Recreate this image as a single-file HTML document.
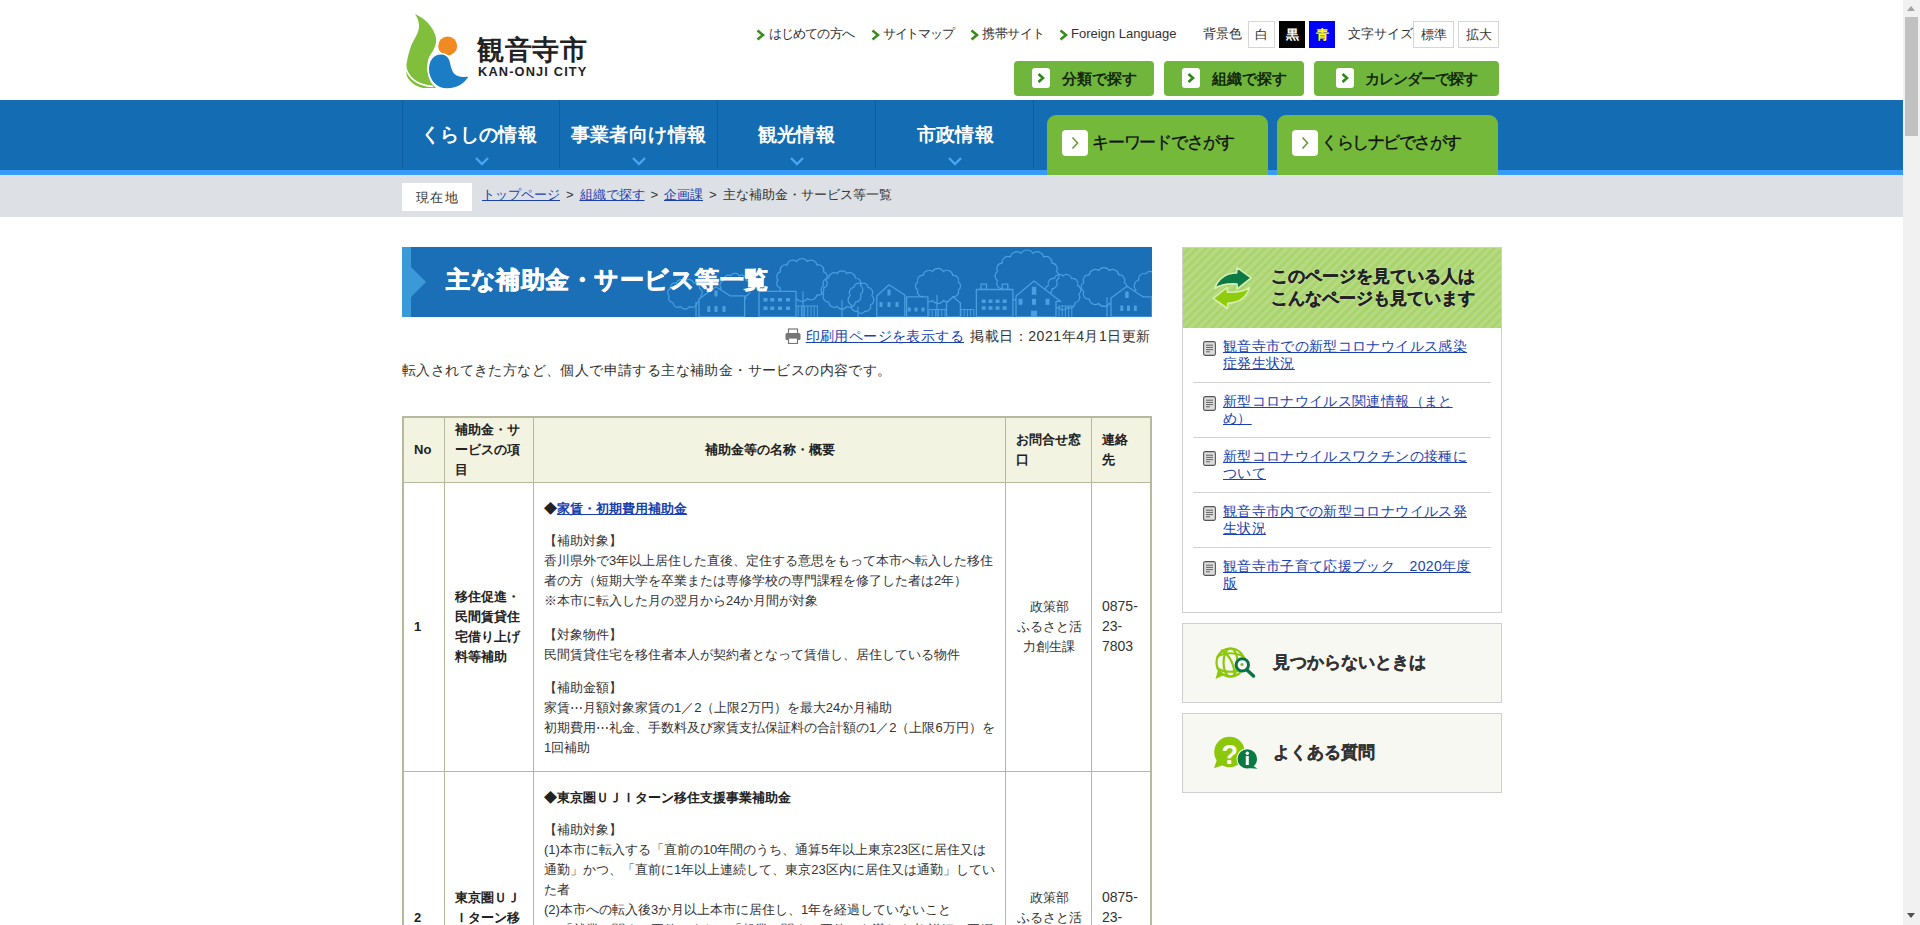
<!DOCTYPE html>
<html lang="ja">
<head>
<meta charset="utf-8">
<title>主な補助金・サービス等一覧 - 観音寺市</title>
<style>
*{box-sizing:border-box;}
html,body{margin:0;padding:0;}
body{width:1920px;height:925px;overflow:hidden;position:relative;background:#fff;font-family:"Liberation Sans",sans-serif;color:#333;font-size:13px;}
a{color:#0033aa;}
.abs{position:absolute;}
/* scrollbar */
#sb{position:absolute;left:1903px;top:0;width:17px;height:925px;background:#f1f1f1;}
#sb .thumb{position:absolute;left:2px;top:17px;width:13px;height:119px;background:#c1c1c1;}
#sb .up{position:absolute;left:4px;top:6px;width:0;height:0;border-left:4.5px solid transparent;border-right:4.5px solid transparent;border-bottom:5px solid #a3a3a3;}
#sb .dn{position:absolute;left:4px;top:913px;width:0;height:0;border-left:4.5px solid transparent;border-right:4.5px solid transparent;border-top:5px solid #505050;}
/* header */
#hdr{position:absolute;left:0;top:0;width:1903px;height:100px;background:#fff;}
.tlink{position:absolute;top:25px;font-size:13px;line-height:18px;color:#333;white-space:nowrap;}
.chev{position:absolute;width:9px;height:12px;}
.tbox{position:absolute;top:21px;height:27px;border:1px solid #d6d6d6;background:#fff;font-size:13px;line-height:25px;text-align:center;color:#333;}
.gbtn{position:absolute;top:61px;height:35px;background:#70b63c;border-radius:4px;}
.gbtn .ic{position:absolute;left:18px;top:7px;width:18px;height:20px;background:#fff;border-radius:3px;}
.gbtn .tx{position:absolute;top:8px;font-size:15px;line-height:19px;font-weight:bold;color:#14280a;white-space:nowrap;}
/* nav */
#nav{position:absolute;left:0;top:100px;width:1903px;height:70px;background:#146cb3;}
#navline{position:absolute;left:0;top:170px;width:1903px;height:5px;background:#379cf8;}
.ni{position:absolute;top:100px;height:68px;border-left:1px solid #0d5c9e;}
.ni .tx{position:absolute;left:0;right:0;top:23px;text-align:center;color:#fff;font-weight:bold;font-size:19px;line-height:24px;letter-spacing:0.4px;white-space:nowrap;}
.ni svg{position:absolute;top:56px;}
.tab{position:absolute;top:115px;height:60px;width:221px;background:#74b93a;border-radius:9px 9px 0 0;}
.tab .ic{position:absolute;left:15px;top:15px;width:26px;height:26px;background:#fff;border-radius:4px;}
.tab .tx{position:absolute;top:17px;font-size:17px;line-height:22px;color:#111;white-space:nowrap;-webkit-text-stroke:0.35px #111;}
/* breadcrumb */
#bc{position:absolute;left:0;top:175px;width:1903px;height:42px;background:#dde1e5;}
#here{position:absolute;left:402px;top:183px;width:70px;height:28px;background:#fff;font-size:13px;line-height:30px;text-align:center;color:#333;letter-spacing:1.3px;text-indent:1.3px;}
#crumbs{position:absolute;left:482px;top:186px;font-size:13px;line-height:18px;color:#333;white-space:nowrap;}
#crumbs a{color:#1a3fb0;}
#crumbs .gt{display:inline-block;width:19.5px;text-align:center;}
/* main */
#ttl{position:absolute;left:402px;top:247px;width:750px;height:70px;background:#1b6fb7;overflow:hidden;}
#ttl .strip{position:absolute;left:0;top:0;width:9px;height:70px;background:#3a9ad8;}
#ttl .tri{position:absolute;left:9px;top:19.5px;width:0;height:0;border-top:15.5px solid transparent;border-bottom:15.5px solid transparent;border-left:15px solid #3a9ad8;}
#ttl h1{position:absolute;left:44px;top:18px;margin:0;font-size:24px;letter-spacing:0.5px;line-height:30px;color:#fff;font-weight:bold;white-space:nowrap;-webkit-text-stroke:0.7px #fff;}
#ttl svg{position:absolute;left:0;top:0;}
#pinfo{position:absolute;right:769px;top:327px;font-size:14px;letter-spacing:0.4px;line-height:18px;white-space:nowrap;color:#333;}
#intro{position:absolute;left:402px;top:361px;font-size:14px;letter-spacing:0.4px;line-height:18px;color:#333;white-space:nowrap;}
table.t{position:absolute;left:402px;top:416px;width:750px;table-layout:fixed;border-collapse:separate;border-spacing:0;border:2px solid #b6b99d;font-size:13px;color:#333;}
table.t th,table.t td{border-right:1px solid #b6b99d;border-bottom:1px solid #b6b99d;line-height:20px;vertical-align:middle;overflow:hidden;}
table.t th:last-child,table.t td:last-child{border-right:none;}
table.t tr:last-child td{border-bottom:none;}
table.t th{background:#f2f3e1;font-weight:bold;color:#222;text-align:left;padding:2px 9px 2px 10px;height:65px;}
table.t th:last-child{padding-right:10px;}
table.t td{padding:16px 9px 13px 10px;}
table.t td:last-child{padding-right:10px;}
table.t td.b,table.t td.c{padding-top:14px;padding-bottom:15px;}
table.t td:last-child{padding-top:13px;padding-bottom:16px;}
table.t td p{margin:0 0 13px 0;}
table.t td p:last-child{margin-bottom:0;}
table.t td.b{font-weight:bold;color:#222;}
table.t td.c{text-align:center;}
/* sidebar */
#side1{position:absolute;left:1182px;top:247px;width:320px;height:366px;border:1px solid #cfcfcf;background:#fff;}
#side1 .hd{position:absolute;left:0;top:0;width:318px;height:80px;background:#a9d46e;background-image:repeating-linear-gradient(135deg,rgba(255,255,255,0.14) 0 3px,rgba(255,255,255,0) 3px 6px);}
#side1 .hd .tx{position:absolute;left:88px;top:18px;font-size:17px;line-height:22px;font-weight:bold;color:#222;white-space:nowrap;-webkit-text-stroke:0.3px #222;text-shadow:0 0 2px rgba(255,255,255,0.6);}
#side1 ul{list-style:none;margin:0;padding:0;position:absolute;left:10px;top:80px;width:298px;}
#side1 li{position:relative;height:55px;border-bottom:1px solid #d3d3d3;}
#side1 li:last-child{border-bottom:none;}
#side1 li .doc{position:absolute;left:10px;top:13px;width:13px;height:15px;}
#side1 li a{position:absolute;left:30px;top:10px;width:252px;font-size:14px;letter-spacing:0.35px;line-height:17px;color:#1a3fb0;}
.sbox{position:absolute;left:1182px;width:320px;height:80px;border:1px solid #cfcfcf;background:#f8f8f2;}
.sbox .tx{position:absolute;left:90px;top:28px;font-size:17px;line-height:22px;font-weight:bold;color:#333;white-space:nowrap;-webkit-text-stroke:0.3px #333;}
.sbox svg{position:absolute;}
</style>
</head>
<body>
<div id="hdr"></div>
<!-- logo -->
<svg class="abs" style="left:400px;top:8px" width="80" height="86" viewBox="0 0 80 86">
  <path d="M15 6.1 C24 10 33 18 35.9 29.3 C37 36 34 42 30 47.4 C27 52 27 60 28 65.6 C29 72 32 77 36.3 80.1 L22.7 80.1 C14 78 7 72 6.4 65.6 C5.5 57 8 47 10.9 38.4 C13 32 19 26 19 18 C19 13 17 9 15 6.1 Z" fill="#80bf3c"/>
  <path d="M5.6 59 C8.5 71 18.5 77.3 33 78.6" stroke="#fff" stroke-width="1.5" fill="none"/>
  <circle cx="47.7" cy="37.9" r="9.5" fill="#f28a22"/>
  <path d="M40.9 45.6 C45.5 45.6 48.5 48 50 52 C51.5 56 51.5 62 55 65.5 C59 69 65 68.5 70 67.5 C66 75 58 81 47.3 81.1 C36 81.2 28.2 72 28.2 61.1 C28.2 52 33.5 45.6 40.9 45.6 Z" fill="#1a7dc6" stroke="#fff" stroke-width="1.6"/>
</svg>
<div class="abs" style="left:477px;top:33px;font-size:27px;line-height:34px;color:#222;font-weight:bold;white-space:nowrap;letter-spacing:0.5px">観音寺市</div>
<div class="abs" style="left:478px;top:64px;font-size:12.8px;line-height:16px;color:#222;font-weight:bold;letter-spacing:1.15px;white-space:nowrap">KAN-ONJI CITY</div>

<!-- top links -->
<svg class="chev" style="left:755.5px;top:28.5px" viewBox="0 0 9 12"><path d="M1.5 1.5 L7 6 L1.5 10.5" stroke="#3a8c1c" stroke-width="2.6" fill="none"/></svg>
<div class="tlink" style="left:769px;letter-spacing:-0.9px">はじめての方へ</div>
<svg class="chev" style="left:870.5px;top:28.5px" viewBox="0 0 9 12"><path d="M1.5 1.5 L7 6 L1.5 10.5" stroke="#3a8c1c" stroke-width="2.6" fill="none"/></svg>
<div class="tlink" style="left:883px;letter-spacing:-1.3px">サイトマップ</div>
<svg class="chev" style="left:969.5px;top:28.5px" viewBox="0 0 9 12"><path d="M1.5 1.5 L7 6 L1.5 10.5" stroke="#3a8c1c" stroke-width="2.6" fill="none"/></svg>
<div class="tlink" style="left:982px;letter-spacing:-0.4px">携帯サイト</div>
<svg class="chev" style="left:1058.5px;top:28.5px" viewBox="0 0 9 12"><path d="M1.5 1.5 L7 6 L1.5 10.5" stroke="#3a8c1c" stroke-width="2.6" fill="none"/></svg>
<div class="tlink" style="left:1071px">Foreign Language</div>

<div class="tlink" style="left:1203px">背景色</div>
<div class="tbox" style="left:1248px;width:27px">白</div>
<div class="tbox" style="left:1279px;width:26px;background:#000;border-color:#000;color:#fff;font-weight:bold">黒</div>
<div class="tbox" style="left:1309px;width:26px;background:#0000ff;border-color:#0000ff;color:#ffff00;font-weight:bold">青</div>
<div class="tlink" style="left:1348px">文字サイズ</div>
<div class="tbox" style="left:1413px;width:41px">標準</div>
<div class="tbox" style="left:1458px;width:41px">拡大</div>

<div class="gbtn" style="left:1014px;width:140px"><div class="ic"><svg width="18" height="20" viewBox="0 0 18 20"><path d="M6.5 6 L11 10 L6.5 14" stroke="#2e8a14" stroke-width="2.6" fill="none"/></svg></div><div class="tx" style="left:48px">分類で探す</div></div>
<div class="gbtn" style="left:1164px;width:140px"><div class="ic"><svg width="18" height="20" viewBox="0 0 18 20"><path d="M6.5 6 L11 10 L6.5 14" stroke="#2e8a14" stroke-width="2.6" fill="none"/></svg></div><div class="tx" style="left:48px">組織で探す</div></div>
<div class="gbtn" style="left:1314px;width:185px"><div class="ic" style="left:22px"><svg width="18" height="20" viewBox="0 0 18 20"><path d="M6.5 6 L11 10 L6.5 14" stroke="#2e8a14" stroke-width="2.6" fill="none"/></svg></div><div class="tx" style="left:51px;letter-spacing:-0.95px">カレンダーで探す</div></div>

<!-- nav -->
<div id="nav"></div>
<div id="navline"></div>
<div class="ni" style="left:402px;width:157px"><div class="tx" style="left:-2px;right:2px">くらしの情報</div><svg style="left:71px" width="16" height="10" viewBox="0 0 16 10"><path d="M2 2 L8 8 L14 2" stroke="#4aa6f0" stroke-width="2.4" fill="none"/></svg></div>
<div class="ni" style="left:559px;width:158px"><div class="tx">事業者向け情報</div><svg style="left:71px" width="16" height="10" viewBox="0 0 16 10"><path d="M2 2 L8 8 L14 2" stroke="#4aa6f0" stroke-width="2.4" fill="none"/></svg></div>
<div class="ni" style="left:717px;width:158px"><div class="tx">観光情報</div><svg style="left:71px" width="16" height="10" viewBox="0 0 16 10"><path d="M2 2 L8 8 L14 2" stroke="#4aa6f0" stroke-width="2.4" fill="none"/></svg></div>
<div class="ni" style="left:875px;width:158px"><div class="tx" style="left:1px;right:-1px">市政情報</div><svg style="left:71px" width="16" height="10" viewBox="0 0 16 10"><path d="M2 2 L8 8 L14 2" stroke="#4aa6f0" stroke-width="2.4" fill="none"/></svg></div>
<div class="ni" style="left:1033px;width:1px"></div>
<div class="tab" style="left:1047px"><div class="ic"><svg width="26" height="26" viewBox="0 0 26 26"><path d="M10.5 7.5 L15.5 13 L10.5 18.5" stroke="#6d9c45" stroke-width="1.7" fill="none"/></svg></div><div class="tx" style="left:45px;letter-spacing:-1.2px">キーワードでさがす</div></div>
<div class="tab" style="left:1277px"><div class="ic"><svg width="26" height="26" viewBox="0 0 26 26"><path d="M10.5 7.5 L15.5 13 L10.5 18.5" stroke="#6d9c45" stroke-width="1.7" fill="none"/></svg></div><div class="tx" style="left:44px;letter-spacing:-1.5px">くらしナビでさがす</div></div>

<!-- breadcrumb -->
<div id="bc"></div>
<div id="here">現在地</div>
<div id="crumbs"><a href="#">トップページ</a><span class="gt">&gt;</span><a href="#">組織で探す</a><span class="gt">&gt;</span><a href="#">企画課</a><span class="gt">&gt;</span>主な補助金・サービス等一覧</div>

<!-- title -->
<div id="ttl"><svg width="750" height="70" viewBox="0 0 750 70" style="position:absolute;left:0;top:0"><path d="M287.5 59.5 A5.2 5.2 0 0 1 278.5 59.5 A5.0 5.0 0 0 1 270.9 55.5 A4.4 4.4 0 0 1 267.2 48.9 A4.3 4.3 0 0 1 268.4 41.6 A4.7 4.7 0 0 1 274.3 36.1 A5.2 5.2 0 0 1 283.0 34.0 A5.2 5.2 0 0 1 291.7 36.1 A4.7 4.7 0 0 1 297.6 41.6 A4.3 4.3 0 0 1 298.8 48.9 A4.4 4.4 0 0 1 295.1 55.5 A5.0 5.0 0 0 1 287.5 59.5 Z" fill="none" stroke="#4a9fe0" stroke-width="1.2"/><path d="M294 54.8 V70" stroke="#4a9fe0" stroke-width="1.2"/><path d="M337.3 53.4 A5.0 5.0 0 0 1 328.7 53.4 A4.9 4.9 0 0 1 321.7 48.6 A4.7 4.7 0 0 1 319.0 41.0 A4.7 4.7 0 0 1 321.7 33.4 A4.9 4.9 0 0 1 328.7 28.6 A5.0 5.0 0 0 1 337.3 28.6 A4.9 4.9 0 0 1 344.3 33.4 A4.7 4.7 0 0 1 347.0 41.0 A4.7 4.7 0 0 1 344.3 48.6 A4.9 4.9 0 0 1 337.3 53.4 Z" fill="none" stroke="#4a9fe0" stroke-width="1.2"/><path d="M405.3 51.5 A6.2 6.2 0 0 1 394.7 51.5 A6.0 6.0 0 0 1 385.0 47.9 A5.4 5.4 0 0 1 378.4 41.2 A5.0 5.0 0 0 1 376.0 33.0 A5.0 5.0 0 0 1 378.4 24.8 A5.4 5.4 0 0 1 385.0 18.1 A6.0 6.0 0 0 1 394.7 14.5 A6.2 6.2 0 0 1 405.3 14.5 A6.0 6.0 0 0 1 415.0 18.1 A5.4 5.4 0 0 1 421.6 24.8 A5.0 5.0 0 0 1 424.0 33.0 A5.0 5.0 0 0 1 421.6 41.2 A5.4 5.4 0 0 1 415.0 47.9 A6.0 6.0 0 0 1 405.3 51.5 Z" fill="none" stroke="#4a9fe0" stroke-width="1.2"/><path d="M401 44.4 V70" stroke="#4a9fe0" stroke-width="1.2"/><path d="M444.9 59.4 A5.7 5.7 0 0 1 435.1 59.4 A5.6 5.6 0 0 1 426.6 55.0 A5.3 5.3 0 0 1 421.6 47.4 A5.1 5.1 0 0 1 421.6 38.6 A5.3 5.3 0 0 1 426.6 31.0 A5.6 5.6 0 0 1 435.1 26.6 A5.7 5.7 0 0 1 444.9 26.6 A5.6 5.6 0 0 1 453.4 31.0 A5.3 5.3 0 0 1 458.4 38.6 A5.1 5.1 0 0 1 458.4 47.4 A5.3 5.3 0 0 1 453.4 55.0 A5.6 5.6 0 0 1 444.9 59.4 Z" fill="none" stroke="#4a9fe0" stroke-width="1.2"/><path d="M440 53.2 V70" stroke="#4a9fe0" stroke-width="1.2"/><path d="M462.8 64.2 A4.4 4.4 0 0 1 455.2 64.2 A4.9 4.9 0 0 1 449.5 58.0 A5.5 5.5 0 0 1 448.2 48.6 A5.3 5.3 0 0 1 451.9 40.3 A4.5 4.5 0 0 1 459.0 37.0 A4.5 4.5 0 0 1 466.1 40.3 A5.3 5.3 0 0 1 469.8 48.6 A5.5 5.5 0 0 1 468.5 58.0 A4.9 4.9 0 0 1 462.8 64.2 Z" fill="none" stroke="#4a9fe0" stroke-width="1.2"/><path d="M456 59.4 V70" stroke="#4a9fe0" stroke-width="1.2"/><path d="M541.4 53.5 A6.3 6.3 0 0 1 530.6 53.5 A5.9 5.9 0 0 1 521.2 49.6 A5.0 5.0 0 0 1 515.7 42.9 A4.5 4.5 0 0 1 515.7 35.1 A5.0 5.0 0 0 1 521.2 28.4 A5.9 5.9 0 0 1 530.6 24.5 A6.3 6.3 0 0 1 541.4 24.5 A5.9 5.9 0 0 1 550.8 28.4 A5.0 5.0 0 0 1 556.3 35.1 A4.5 4.5 0 0 1 556.3 42.9 A5.0 5.0 0 0 1 550.8 49.6 A5.9 5.9 0 0 1 541.4 53.5 Z" fill="none" stroke="#4a9fe0" stroke-width="1.2"/><path d="M535 48.0 V70" stroke="#4a9fe0" stroke-width="1.2"/><path d="M630.9 51.6 A6.8 6.8 0 0 1 619.1 51.6 A6.6 6.6 0 0 1 608.3 48.1 A6.0 6.0 0 0 1 600.1 41.8 A5.5 5.5 0 0 1 595.6 33.5 A5.2 5.2 0 0 1 595.6 24.5 A5.5 5.5 0 0 1 600.1 16.2 A6.0 6.0 0 0 1 608.3 9.9 A6.6 6.6 0 0 1 619.1 6.4 A6.8 6.8 0 0 1 630.9 6.4 A6.6 6.6 0 0 1 641.7 9.9 A6.0 6.0 0 0 1 649.9 16.2 A5.5 5.5 0 0 1 654.4 24.5 A5.2 5.2 0 0 1 654.4 33.5 A5.5 5.5 0 0 1 649.9 41.8 A6.0 6.0 0 0 1 641.7 48.1 A6.6 6.6 0 0 1 630.9 51.6 Z" fill="none" stroke="#4a9fe0" stroke-width="1.2"/><path d="M665.5 60.4 A5.2 5.2 0 0 1 656.5 60.4 A5.2 5.2 0 0 1 648.9 55.5 A5.2 5.2 0 0 1 645.2 47.3 A5.2 5.2 0 0 1 646.4 38.4 A5.2 5.2 0 0 1 652.3 31.5 A5.2 5.2 0 0 1 661.0 29.0 A5.2 5.2 0 0 1 669.7 31.5 A5.2 5.2 0 0 1 675.6 38.4 A5.2 5.2 0 0 1 676.8 47.3 A5.2 5.2 0 0 1 673.1 55.5 A5.2 5.2 0 0 1 665.5 60.4 Z" fill="none" stroke="#4a9fe0" stroke-width="1.2"/><path d="M707.4 56.4 A6.3 6.3 0 0 1 696.6 56.4 A6.0 6.0 0 0 1 687.2 52.0 A5.4 5.4 0 0 1 681.7 44.4 A5.1 5.1 0 0 1 681.7 35.6 A5.4 5.4 0 0 1 687.2 28.0 A6.0 6.0 0 0 1 696.6 23.6 A6.3 6.3 0 0 1 707.4 23.6 A6.0 6.0 0 0 1 716.8 28.0 A5.4 5.4 0 0 1 722.3 35.6 A5.1 5.1 0 0 1 722.3 44.4 A5.4 5.4 0 0 1 716.8 52.0 A6.0 6.0 0 0 1 707.4 56.4 Z" fill="none" stroke="#4a9fe0" stroke-width="1.2"/><path d="M705 50.2 V70" stroke="#4a9fe0" stroke-width="1.2"/><path d="M752.3 59.2 A5.0 5.0 0 0 1 743.7 59.2 A5.4 5.4 0 0 1 736.7 53.0 A6.0 6.0 0 0 1 734.0 43.0 A6.0 6.0 0 0 1 736.7 33.0 A5.4 5.4 0 0 1 743.7 26.8 A5.0 5.0 0 0 1 752.3 26.8 A5.4 5.4 0 0 1 759.3 33.0 A6.0 6.0 0 0 1 762.0 43.0 A6.0 6.0 0 0 1 759.3 53.0 A5.4 5.4 0 0 1 752.3 59.2 Z" fill="none" stroke="#4a9fe0" stroke-width="1.2"/><path d="M393 59 H416 M393 59 V70 M396.2 59 V70 M399.4 59 V70 M402.6 59 V70 M405.8 59 V70 M409.0 59 V70 M412.2 59 V70 M415.4 59 V70" stroke="#4a9fe0" stroke-width="1"/><path d="M527 62.5 H572 M527 62.5 V70 M530.2 62.5 V70 M533.4 62.5 V70 M536.6 62.5 V70 M539.8 62.5 V70 M543.0 62.5 V70 M546.2 62.5 V70 M549.4 62.5 V70 M552.6 62.5 V70 M555.8 62.5 V70 M559.0 62.5 V70 M562.2 62.5 V70 M565.4 62.5 V70 M568.6 62.5 V70 M571.8 62.5 V70" stroke="#4a9fe0" stroke-width="1"/><path d="M657 59 H671 M657 59 V70 M660.2 59 V70 M663.4 59 V70 M666.6 59 V70 M669.8 59 V70" stroke="#4a9fe0" stroke-width="1"/><path d="M297 70 L297 52 L314 39.7 L328 48.8 L342.6 48.8 L342.6 70 Z" fill="#1b6fb7" stroke="#4a9fe0" stroke-width="1.3" stroke-linejoin="round"/><rect x="312.5" y="43.5" width="3" height="6" fill="#4a9fe0"/><rect x="305.3" y="59" width="3" height="6" fill="#4a9fe0"/><rect x="312.5" y="59" width="3" height="6" fill="#4a9fe0"/><rect x="320.5" y="59" width="3" height="6" fill="#4a9fe0"/><path d="M357 70 L357 44.3 L394 44.3 L394 70 Z" fill="#1b6fb7" stroke="#4a9fe0" stroke-width="1.3" stroke-linejoin="round"/><rect x="361.5" y="51" width="4" height="3.5" fill="#4a9fe0"/><rect x="368.3" y="51" width="4" height="3.5" fill="#4a9fe0"/><rect x="376.0" y="51" width="4" height="3.5" fill="#4a9fe0"/><rect x="384.0" y="51" width="4" height="3.5" fill="#4a9fe0"/><rect x="361.5" y="59.5" width="4" height="3.5" fill="#4a9fe0"/><rect x="368.3" y="59.5" width="4" height="3.5" fill="#4a9fe0"/><rect x="376.0" y="59.5" width="4" height="3.5" fill="#4a9fe0"/><rect x="384.0" y="59.5" width="4" height="3.5" fill="#4a9fe0"/><path d="M504.6 70 L504.6 49.8 L525.9 49.8 L525.9 70 Z" fill="#1b6fb7" stroke="#4a9fe0" stroke-width="1.3" stroke-linejoin="round"/><rect x="505.8" y="60.5" width="3" height="4" fill="#4a9fe0"/><rect x="512.5" y="60.5" width="3" height="4" fill="#4a9fe0"/><rect x="519.5" y="60.5" width="3" height="4" fill="#4a9fe0"/><path d="M474.8 70 L474.8 49 L487 37.8 L502.8 48 L502.8 70 Z" fill="#1b6fb7" stroke="#4a9fe0" stroke-width="1.3" stroke-linejoin="round"/><rect x="485.5" y="42.5" width="3" height="6" fill="#4a9fe0"/><rect x="477.5" y="55" width="3" height="5" fill="#4a9fe0"/><rect x="485.5" y="55" width="3" height="5" fill="#4a9fe0"/><rect x="493.5" y="55" width="3" height="5" fill="#4a9fe0"/><path d="M544.5 70 L544.5 56 L551 49.8 L558.4 56 L558.4 70 Z" fill="#1b6fb7" stroke="#4a9fe0" stroke-width="1.3" stroke-linejoin="round"/><path d="M579 42.5 L579 37.2 L584.5 37.2 L584.5 42.5 Z" fill="#1b6fb7" stroke="#4a9fe0" stroke-width="1.3" stroke-linejoin="round"/><path d="M600.2 42.5 L600.2 37.2 L605.8 37.2 L605.8 42.5 Z" fill="#1b6fb7" stroke="#4a9fe0" stroke-width="1.3" stroke-linejoin="round"/><path d="M574.4 70 L574.4 42.5 L610.9 42.5 L610.9 70 Z" fill="#1b6fb7" stroke="#4a9fe0" stroke-width="1.3" stroke-linejoin="round"/><rect x="579.7" y="52.5" width="4" height="3.5" fill="#4a9fe0"/><rect x="586.5" y="52.5" width="4" height="3.5" fill="#4a9fe0"/><rect x="593.5" y="52.5" width="4" height="3.5" fill="#4a9fe0"/><rect x="600.6" y="52.5" width="4" height="3.5" fill="#4a9fe0"/><rect x="579.7" y="59.3" width="4" height="3.5" fill="#4a9fe0"/><rect x="586.5" y="59.3" width="4" height="3.5" fill="#4a9fe0"/><rect x="593.5" y="59.3" width="4" height="3.5" fill="#4a9fe0"/><rect x="600.6" y="59.3" width="4" height="3.5" fill="#4a9fe0"/><path d="M614 70 L614 49 L632 33.9 L658.7 54.4 L654 54.4 L654 70 Z" fill="#1b6fb7" stroke="#4a9fe0" stroke-width="1.3" stroke-linejoin="round"/><rect x="629.8" y="39.8" width="4.5" height="8" fill="#4a9fe0"/><rect x="616.5" y="51.8" width="4" height="6" fill="#4a9fe0"/><rect x="630.0" y="51.8" width="4" height="6" fill="#4a9fe0"/><rect x="643.5" y="51.8" width="4" height="6" fill="#4a9fe0"/><rect x="629.0" y="63.7" width="6" height="6.3" fill="#4a9fe0"/><path d="M709 70 L709 51 L725 39.2 L741 49.8 L750 49.8 L750 70 Z" fill="#1b6fb7" stroke="#4a9fe0" stroke-width="1.3" stroke-linejoin="round"/><rect x="723.2" y="44.5" width="3.5" height="6.5" fill="#4a9fe0"/><rect x="718.3" y="58.5" width="3" height="5.5" fill="#4a9fe0"/><rect x="725.0" y="58.5" width="3" height="5.5" fill="#4a9fe0"/><rect x="731.8" y="58.5" width="3" height="5.5" fill="#4a9fe0"/></svg><div class="strip"></div><div class="tri"></div><h1>主な補助金・サービス等一覧</h1></div>

<div id="pinfo"><svg style="vertical-align:-3px;margin-right:5px" width="16" height="16" viewBox="0 0 16 16"><rect x="3.5" y="1" width="9" height="5" fill="#fff" stroke="#777" stroke-width="1.2"/><rect x="0.5" y="5" width="15" height="7" rx="1.5" fill="#777"/><rect x="3.5" y="10" width="9" height="5.5" fill="#fff" stroke="#777" stroke-width="1.2"/></svg><a href="#" style="color:#1a3fb0">印刷用ページを表示する</a><span style="margin-left:6px;letter-spacing:0.55px">掲載日：2021年4月1日更新</span></div>
<div id="intro">転入されてきた方など、個人で申請する主な補助金・サービスの内容です。</div>

<table class="t">
<colgroup><col style="width:41px"><col style="width:89px"><col style="width:472px"><col style="width:86px"><col style="width:58px"></colgroup>
<tr><th>No</th><th>補助金・サービスの項目</th><th style="text-align:center">補助金等の名称・概要</th><th>お問合せ窓口</th><th>連絡先</th></tr>
<tr><td class="b">1</td><td class="b">移住促進・民間賃貸住宅借り上げ料等補助</td>
<td><p style="font-weight:bold;color:#222;margin-bottom:12px">◆<a href="#" style="color:#1a3fb0">家賃・初期費用補助金</a></p>
<p style="margin-bottom:14px">【補助対象】<br>香川県外で3年以上居住した直後、定住する意思をもって本市へ転入した移住者の方（短期大学を卒業または専修学校の専門課程を修了した者は2年）<br>※本市に転入した月の翌月から24か月間が対象</p>
<p>【対象物件】<br>民間賃貸住宅を移住者本人が契約者となって賃借し、居住している物件</p>
<p>【補助金額】<br>家賃⋯月額対象家賃の1／2（上限2万円）を最大24か月補助<br>初期費用⋯礼金、手数料及び家賃支払保証料の合計額の1／2（上限6万円）を1回補助</p></td>
<td class="c">政策部<br>ふるさと活力創生課</td><td style="font-size:14px">0875-23-7803</td></tr>
<tr><td class="b">2</td><td class="b">東京圏ＵＪＩターン移住支援事業</td>
<td style="padding-bottom:18px"><p style="font-weight:bold;color:#222;margin-bottom:12px">◆東京圏ＵＪＩターン移住支援事業補助金</p>
<p style="margin-bottom:14px">【補助対象】<br>(1)本市に転入する「直前の10年間のうち、通算5年以上東京23区に居住又は通勤」かつ、「直前に1年以上連続して、東京23区内に居住又は通勤」していた者<br>(2)本市への転入後3か月以上本市に居住し、1年を経過していないこと<br>(3)「就業に関する要件」または「起業に関する要件」を満たす者(詳細は要綱をご確認ください)</p>
<p>【補助金額】<br>2人以上の世帯　100万円、単身の場合　60万円</p>
<p>※予算の範囲内での交付となります。</p></td>
<td class="c">政策部<br>ふるさと活力創生課</td><td style="font-size:14px">0875-23-7803</td></tr>
</table>

<!-- sidebar -->
<div id="side1">
  <div class="hd">
    <svg style="position:absolute;left:17px;top:10px" width="64" height="60" viewBox="0 0 64 60">
      <g stroke="#d8f0b0" stroke-width="1.6" stroke-linejoin="round">
      <path d="M15 30.5 C17 22 25 15 36.6 15 L37 9.7 L51.2 19.8 L37.3 30.8 L37 26 C27 25.5 19.5 27 15 30.5 Z" fill="#0b7a45"/>
      <path d="M15 30.5 C17 22 25 15 36.6 15 L37 9.7 L51.2 19.8 L37.3 30.8 L37 26 C27 25.5 19.5 27 15 30.5 Z" fill="#8fcc0c" transform="rotate(180 32.2 30.1)"/>
      </g>
    </svg>
    <div class="tx">このページを見ている人は<br>こんなページも見ています</div>
  </div>
  <ul>
    <li><svg class="doc" viewBox="0 0 13 15"><rect x="0.6" y="0.6" width="11.8" height="13.8" rx="1.6" fill="#dcdcdc" stroke="#555" stroke-width="1.1"/><path d="M3 4.2h7M3 6.4h7M3 8.6h7M3 10.8h4" stroke="#555" stroke-width="0.9"/></svg><a href="#">観音寺市での新型コロナウイルス感染症発生状況</a></li>
    <li><svg class="doc" viewBox="0 0 13 15"><rect x="0.6" y="0.6" width="11.8" height="13.8" rx="1.6" fill="#dcdcdc" stroke="#555" stroke-width="1.1"/><path d="M3 4.2h7M3 6.4h7M3 8.6h7M3 10.8h4" stroke="#555" stroke-width="0.9"/></svg><a href="#">新型コロナウイルス関連情報（まとめ）</a></li>
    <li><svg class="doc" viewBox="0 0 13 15"><rect x="0.6" y="0.6" width="11.8" height="13.8" rx="1.6" fill="#dcdcdc" stroke="#555" stroke-width="1.1"/><path d="M3 4.2h7M3 6.4h7M3 8.6h7M3 10.8h4" stroke="#555" stroke-width="0.9"/></svg><a href="#">新型コロナウイルスワクチンの接種について</a></li>
    <li><svg class="doc" viewBox="0 0 13 15"><rect x="0.6" y="0.6" width="11.8" height="13.8" rx="1.6" fill="#dcdcdc" stroke="#555" stroke-width="1.1"/><path d="M3 4.2h7M3 6.4h7M3 8.6h7M3 10.8h4" stroke="#555" stroke-width="0.9"/></svg><a href="#">観音寺市内での新型コロナウイルス発生状況</a></li>
    <li><svg class="doc" viewBox="0 0 13 15"><rect x="0.6" y="0.6" width="11.8" height="13.8" rx="1.6" fill="#dcdcdc" stroke="#555" stroke-width="1.1"/><path d="M3 4.2h7M3 6.4h7M3 8.6h7M3 10.8h4" stroke="#555" stroke-width="0.9"/></svg><a href="#">観音寺市子育て応援ブック　2020年度版</a></li>
  </ul>
</div>
<div class="sbox" style="top:623px">
  <svg style="left:25px;top:16px" width="54" height="46" viewBox="0 0 54 46">
    <g fill="none" stroke="#8cc80a" stroke-width="2.2">
      <circle cx="22.5" cy="22.5" r="14"/>
      <ellipse cx="22.5" cy="22.5" rx="7" ry="14"/>
      <path d="M9 17 C16 12 28 12 36 17 M9 28 C16 33 28 33 36 28 M13 10 C20 14 26 22 27 36"/>
    </g>
    <path d="M7.5 39 L10 30 L16 35 Z" fill="#8cc80a"/>
    <circle cx="34.3" cy="24.9" r="7.5" fill="#f8f8f2"/>
    <circle cx="34.3" cy="24.9" r="6.2" fill="#fff" stroke="#0a7343" stroke-width="3"/>
    <path d="M39 30 L45.5 36" stroke="#0a7343" stroke-width="3.4" stroke-linecap="round"/>
    <circle cx="34" cy="24.5" r="1.6" fill="#7cc020"/>
  </svg>
  <div class="tx">見つからないときは</div>
</div>
<div class="sbox" style="top:713px">
  <svg style="left:25px;top:16px" width="54" height="46" viewBox="0 0 54 46">
    <circle cx="21.5" cy="22" r="15.3" fill="#8cc80a"/>
    <path d="M6 38.3 L9.5 28 L18 34 Z" fill="#8cc80a"/>
    <text x="13.6" y="33.8" font-family="Liberation Sans" font-weight="bold" font-size="27" fill="#fff">?</text>
    <circle cx="39.3" cy="28.9" r="10.7" fill="#f8f8f2"/>
    <circle cx="39.3" cy="28.9" r="9.7" fill="#0a7a45"/>
    <path d="M44 35 L49.5 38.8 L40 38 Z" fill="#0a7a45"/>
    <rect x="37.8" y="26" width="3" height="9" fill="#fff"/><circle cx="39.3" cy="23.3" r="1.7" fill="#fff"/>
  </svg>
  <div class="tx">よくある質問</div>
</div>

<div id="sb"><div class="up"></div><div class="thumb"></div><div class="dn"></div></div>
</body>
</html>
